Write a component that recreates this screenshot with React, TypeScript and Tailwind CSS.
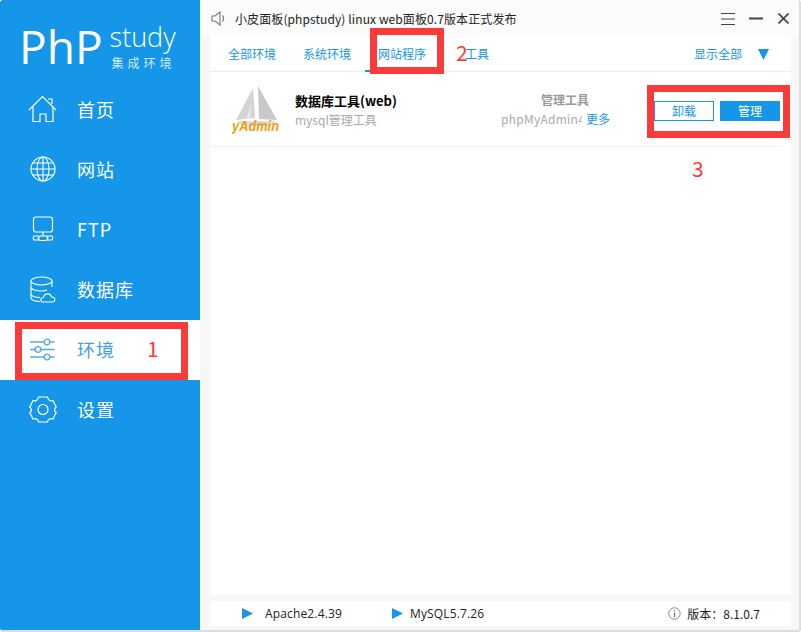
import { ReactNode } from 'react';

const cjk = { fontFamily: '"Noto Sans CJK SC", "Noto Sans", sans-serif' };
const latin = { fontFamily: '"Open Sans", sans-serif' };

function HomeIcon() {
  return (
    <svg width="30" height="28" viewBox="0 0 30 28" fill="none" stroke="currentColor" strokeWidth="1.2">
      <path d="M1 15 L14.5 1.5 L28 15" />
      <path d="M5 12 V26.5 H12 V19 H18 V26.5 H25 V12" />
      <path d="M20 4 H24 V9" />
    </svg>
  );
}

function GlobeIcon() {
  return (
    <svg width="26" height="26" viewBox="0 0 26 26" fill="none" stroke="currentColor" strokeWidth="1.1">
      <circle cx="13" cy="13" r="12" />
      <ellipse cx="13" cy="13" rx="6" ry="12" />
      <path d="M13 1 V25 M1 13 H25 M3 7 H23 M3 19 H23" />
    </svg>
  );
}

function FtpIcon() {
  return (
    <svg width="22" height="26" viewBox="0 0 22 26" fill="none" stroke="currentColor" strokeWidth="1.2">
      <rect x="1.5" y="1" width="19" height="15" rx="2.5" />
      <path d="M11 16 V20" />
      <path d="M7 20 H2 Q.7 22 2 24 H7 M15 20 H20 Q21.3 22 20 24 H15" />
      <path d="M8 20 H14 L16 22 L14 24.5 H8 L6 22 Z" />
    </svg>
  );
}

function DbIcon() {
  return (
    <svg width="26" height="27" viewBox="0 0 26 27" fill="none" stroke="currentColor" strokeWidth="1.1">
      <ellipse cx="11.5" cy="5" rx="10.5" ry="4" />
      <path d="M1 5 V22 C1 24 5 25.5 10 25.5 M22 5 V11 M1 11 C1 13.5 6 15 11.5 15 C14 15 15 14.8 17 14 M1 18 C1 20 5 21.5 10 21.5" />
      <path d="M13 26 C10 26 10 21.5 13.5 21.5 C14 17 20.5 16.5 21.5 21 C25.5 20.5 26 26 22.5 26 Z" />
    </svg>
  );
}

function SlidersIcon() {
  return (
    <svg width="25" height="25" viewBox="0 0 25 25" fill="none" stroke="#56a8e8" strokeWidth="1.3">
      <path d="M0 5 H14 M20 5 H24.5 M0 12.5 H5 M11 12.5 H24.5 M0 20 H14 M20 20 H24.5" />
      <circle cx="17" cy="5" r="2.8" />
      <circle cx="8" cy="12.5" r="2.8" />
      <circle cx="17" cy="20" r="2.8" />
    </svg>
  );
}

function GearIcon() {
  return (
    <svg width="28" height="27" viewBox="0 0 28 27" fill="none" stroke="currentColor" strokeWidth="1.2">
      <path d="M9.5 1 H18.5 C19 4.5 21.5 5.5 24 4.5 L27.2 11 C25 13 25 15 27.2 16.5 L24 23 C21.5 22 19 23 18.5 26 H9.5 C9 23 6.5 22 4 23 L.8 16.5 C3 15 3 13 .8 11 L4 4.5 C6.5 5.5 9 4.5 9.5 1 Z" />
      <circle cx="14" cy="13.5" r="5" />
    </svg>
  );
}

function SpeakerIcon() {
  return (
    <svg width="15" height="15" viewBox="0 0 15 15" fill="none" stroke="#777" strokeWidth="1.1">
      <path d="M1 5 H4 L9 1 V14 L4 10 H1 Z" />
      <path d="M11.5 4.5 C13 6 13 9 11.5 10.5" />
    </svg>
  );
}

function LogoShip() {
  return (
    <svg width="50" height="50" viewBox="0 0 50 50">
      <path d="M21 4 L23 34 L4 36 Z" fill="#d4d4d4" />
      <path d="M26 2 L45 36 L27 35 Z" fill="#c8c8c8" />
      <path d="M20 18 L18 35 L14 35 Z" fill="#e8e8e8" />
      <path d="M5 37 L44 37 L38 42 L10 42 Z" fill="#dcdcdc" />
      <text
        x="0"
        y="47"
        fontSize="14"
        fontWeight="700"
        fontStyle="italic"
        fill="#f49b10"
        textLength="47"
        lengthAdjust="spacingAndGlyphs"
        fontFamily='"Liberation Sans", sans-serif'
      >
        yAdmin
      </text>
    </svg>
  );
}

function NavItem({ icon, label, active }: { icon: ReactNode; label: string; active?: boolean }) {
  return (
    <div className={`flex h-[60px] items-center pb-[2px] ${active ? 'bg-white text-[#3f9fe8]' : 'text-white'}`}>
      <div className="flex w-[77px] justify-center pl-[8px]">{icon}</div>
      <span className="text-[18px] leading-none tracking-[1px]" style={cjk}>
        {label}
      </span>
    </div>
  );
}

function Tab({ label, className }: { label: string; className?: string }) {
  return <span className={`text-[12px] leading-none text-[#1596e8] ${className ?? ''}`}>{label}</span>;
}

// red marks drawn on top of the screenshot
function Mark({ className }: { className: string }) {
  return <div className={`absolute border-[7px] border-[#fd3a3a] ${className}`} />;
}

function MarkNum({ n, className }: { n: string; className: string }) {
  return <span className={`absolute text-[21px] leading-none text-[#fd3a3a] ${className}`}>{n}</span>;
}

export default function App() {
  return (
    <div
      className="relative flex h-[632px] w-[801px] overflow-hidden rounded-[3px] border-r-2 border-b-2 border-[#dedede] bg-[#f7f7f7]"
      style={cjk}
    >
      {/* Sidebar */}
      <aside className="flex w-[200px] shrink-0 flex-col bg-[#1596e8]">
        <div className="flex h-[80px] pl-[19px] text-white">
          <span className="mt-[21px] text-[46px] leading-[50px] font-normal" style={latin}>
            PhP
          </span>
          <div className="ml-[7px] flex flex-col">
            <span className="mt-[20px] text-[27px] leading-[34px] font-light" style={latin}>
              study
            </span>
            <span className="mt-[2px] ml-[2px] text-[12px] leading-[14px] tracking-[4px] text-[#d6ecfb]">集成环境</span>
          </div>
        </div>
        <NavItem icon={<HomeIcon />} label="首页" />
        <NavItem icon={<GlobeIcon />} label="网站" />
        <NavItem icon={<FtpIcon />} label="FTP" />
        <NavItem icon={<DbIcon />} label="数据库" />
        <NavItem icon={<SlidersIcon />} label="环境" active />
        <NavItem icon={<GearIcon />} label="设置" />
      </aside>

      {/* Main */}
      <main className="flex min-w-0 flex-1 flex-col">
        <div className="flex h-[36px] items-center bg-[#fbfbfb] pt-[1px] pl-[11px]">
          <SpeakerIcon />
          <span className="ml-[9px] text-[12px] leading-none tracking-[0.1px] text-[#222]">小皮面板(phpstudy) linux web面板0.7版本正式发布</span>
          <div className="ml-auto flex items-center gap-[14px] pr-[10px]">
            <svg width="14" height="12" viewBox="0 0 14 12" stroke="#444" strokeWidth="1">
              <path d="M0 .5 H14 M0 6 H14 M0 11.5 H14" />
            </svg>
            <svg width="14" height="3" viewBox="0 0 14 3" stroke="#444" strokeWidth="2">
              <path d="M0 1.5 H14" />
            </svg>
            <svg width="11" height="11" viewBox="0 0 11 11" stroke="#444" strokeWidth="1.7" className="ml-[1px]">
              <path d="M0.5 0.5 L10.5 10.5 M10.5 0.5 L0.5 10.5" />
            </svg>
          </div>
        </div>

        <div className="ml-[10px] flex h-[559px] w-[581px] flex-col bg-white">
          <div className="relative flex h-[36px] shrink-0 items-center border-b border-[#eeeeee] pr-[22px] pl-[18px]">
            <Tab label="全部环境" />
            <Tab label="系统环境" className="ml-[27px]" />
            <Tab label="网站程序" className="ml-[27px]" />
            <Tab label="工具" className="ml-[39px]" />
            <span className="absolute bottom-[-1px] left-[155px] h-[2px] w-[60px] bg-[#1596e8]" />
            <Tab label="显示全部" className="ml-auto" />
            <svg width="11" height="11" viewBox="0 0 11 11" className="mt-[1px] ml-[16px]">
              <path d="M0 0 H11 L5.5 11 Z" fill="#1596e8" />
            </svg>
          </div>

          <div className="flex h-[75px] w-[571px] shrink-0 items-center border-b border-[#f0f0f0] pl-[22px]">
            <LogoShip />
            <div className="ml-[13px] flex w-[206px] flex-col gap-[3px] pt-[2px]">
              <span className="text-[13px] leading-[16px] font-bold text-black">数据库工具(web)</span>
              <span className="text-[12px] leading-[16px] text-[#aaaaaa]">mysql管理工具</span>
            </div>
            <div className="flex w-[150px] flex-col pt-[1px]">
              <span className="ml-[40px] text-[12px] leading-[16px] font-bold text-[#999999]">管理工具</span>
              <div className="mt-[3px] flex text-[12px] leading-[16px]">
                <span className="w-[81px] overflow-hidden tracking-[0.25px] whitespace-nowrap text-[#aaaaaa]">phpMyAdmin4.8.5</span>
                <span className="ml-[4px] text-[#1596e8]">更多</span>
              </div>
            </div>
            <div className="mt-[4px] ml-[3px] flex gap-[6px]">
              <button className="h-[20px] w-[60px] border border-[#1596e8] bg-white text-[12px] leading-none text-[#1596e8]">卸载</button>
              <button className="h-[20px] w-[60px] bg-[#1596e8] text-[12px] leading-none text-white">管理</button>
            </div>
          </div>
        </div>

        <div className="mt-[6px] ml-[10px] flex h-[25px] w-[581px] items-center rounded-[2px] bg-white pr-[31px] text-[12px] text-[#222]">
          <svg width="11" height="11" viewBox="0 0 11 11" className="ml-[32px]">
            <path d="M0 0 L11 5.5 L0 11 Z" fill="#1596e8" />
          </svg>
          <span className="ml-[12px] tracking-[0.15px]" style={latin}>Apache2.4.39</span>
          <svg width="11" height="11" viewBox="0 0 11 11" className="ml-[50px]">
            <path d="M0 0 L11 5.5 L0 11 Z" fill="#1596e8" />
          </svg>
          <span className="ml-[7px] tracking-[0.15px]" style={latin}>MySQL5.7.26</span>
          <svg width="13" height="13" viewBox="0 0 13 13" fill="none" className="ml-auto">
            <circle cx="6.5" cy="6.5" r="5.7" stroke="#888" />
            <path d="M6.5 5.5 V10 M6.5 3 V4.2" stroke="#666" strokeWidth="1.1" />
          </svg>
          <span className="ml-[6px]">版本：8.1.0.7</span>
        </div>
      </main>

      {/* Annotations */}
      <Mark className="top-[322px] left-[15px] h-[58px] w-[173px]" />
      <Mark className="top-[28px] left-[370px] h-[46px] w-[74px]" />
      <Mark className="top-[85px] left-[647px] h-[53px] w-[143px]" />
      <MarkNum n="1" className="top-[338px] left-[147px]" />
      <MarkNum n="2" className="top-[42px] left-[456px]" />
      <MarkNum n="3" className="top-[158px] left-[692px]" />
    </div>
  );
}
